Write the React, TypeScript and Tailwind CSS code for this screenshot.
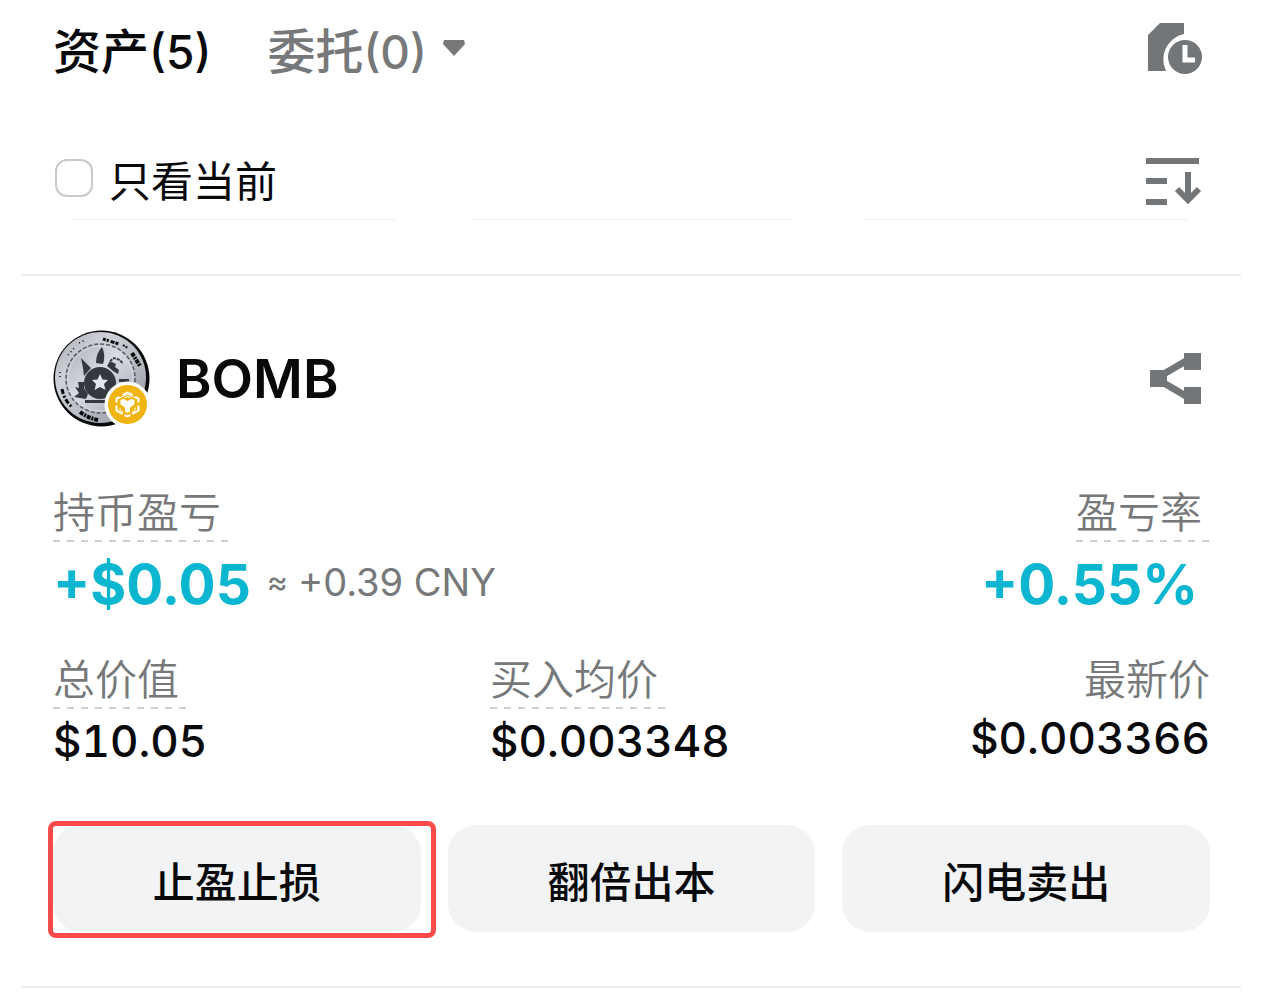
import React, { useState } from 'react'
import clsx from 'clsx'

const ACTIONS = ['止盈止损', '翻倍出本', '闪电卖出']

const HistoryIcon = () => (
    <svg width="56" height="52" viewBox="0 0 56 52" fill="#737678">
        <path d="M12 0H36V11A26 26 0 0 0 18 48H0V12Z" />
        <circle cx="37" cy="34" r="17" />
        <path d="M37 22V37H47" fill="none" stroke="#fff" strokeWidth="5" />
    </svg>
)

const SortIcon = () => (
    <svg width="56" height="48" viewBox="0 0 56 48" fill="none" stroke="#737678">
        <path d="M0 3H53M0 23H21M0 44H21" strokeWidth="6" />
        <path d="M42 14V42M31 31L42 42L53 31" strokeWidth="6" />
    </svg>
)

const ShareIcon = () => (
    <svg width="52" height="52" viewBox="0 0 52 52" fill="#737678">
        <path d="M0 17H17V34H0ZM34 0H51V17H34ZM34 34H51V51H34Z" />
        <path d="M12 22L36 8M12 29L36 43" fill="none" stroke="#737678" strokeWidth="7" />
    </svg>
)

const CoinLogo = () => (
    <svg width="97" height="97" viewBox="0 0 97 97" role="img" aria-label="BOMB">
        <defs>
            <linearGradient id="coin" x1="0" y1="0" x2="1" y2="1">
                <stop offset="0" stopColor="#a7a9af" />
                <stop offset="0.3" stopColor="#cfd1d8" />
                <stop offset="0.6" stopColor="#b9bcc4" />
                <stop offset="1" stopColor="#8f9299" />
            </linearGradient>
            <linearGradient id="face" x1="0" y1="0" x2="1" y2="1">
                <stop offset="0" stopColor="#a9acb4" />
                <stop offset="0.45" stopColor="#d9dce4" />
                <stop offset="1" stopColor="#a3a6af" />
            </linearGradient>
        </defs>
        <circle cx="48.5" cy="48.5" r="48" fill="#08090b" />
        <circle cx="47.5" cy="47.5" r="45.5" fill="url(#coin)" />
        <circle cx="47.5" cy="48.5" r="34.5" fill="url(#face)" stroke="#555960" strokeWidth="1.5" strokeDasharray="4 2" />
        <circle cx="47.5" cy="48.5" r="32.5" fill="none" stroke="#d8dae0" />
        <g fill="none" stroke="#08090b" strokeWidth="3">
            <path d="M50 9L66 14" strokeDasharray="3 1 2 2 4 1" />
            <path d="M70 15L75 18" strokeDasharray="2 1" strokeWidth="2" />
            <path d="M79 23L87 36" strokeDasharray="4 1 2 1" strokeWidth="4" />
            <path d="M9 59Q11 70 19 77" strokeDasharray="5 2 2 2" />
            <path d="M27 82Q35 88 45 90" strokeDasharray="4 1 2 1" strokeWidth="4" />
            <path d="M15 25L22 17M7 47V40M26 13L32 10" strokeDasharray="1 3" strokeWidth="1.5" />
        </g>
        <g fill="#343941">
            <path d="M49 17Q43 23 43 33L50 34Q53 25 49 17Z" />
            <path d="M28 28L38 38L31 46L30 38Z" />
            <path d="M25 52H31V58L35 64L33 69L21 67L26 63L22 57L26 58Z" />
            <path d="M54 36L57 31L63 34L62 37L66 40L65 44L60 41Z" />
            <circle cx="47" cy="53" r="16" />
            <path d="M66 49H76V52H66ZM32 70H54V73H32Z" />
        </g>
        <path d="M57 31L61 28L67 30L70 34" fill="none" stroke="#343941" strokeWidth="2" strokeDasharray="3 1" />
        <path d="M47 44L49.500 49.500L55 50L51 54L52.500 60L47 57L41.500 60L43 54L39 50L44.500 49.500Z" fill="#e3e5ea" />
        <circle cx="74.500" cy="74.500" r="23" fill="#fff" />
        <circle cx="74.500" cy="74.500" r="19.500" fill="#efb40f" />
        <g transform="translate(74.5 74.5)" fill="none" stroke="#fff" strokeWidth="2">
            <path d="M-5 -9.500L0 -12L5 -9.500M8 -7.500L11 -6V-2M11 1V6L5 9.500M3 10.500L0 12L-3 10.500M-5 9.500L-11 6V1M-11 -2V-6L-8 -7.500" />
            <path d="M-10 -6L-6 -7.500L0 -10M10 -6L6 -7.500L0 -10M-3 -6.500L0 -8L3 -6.500" strokeWidth="1" />
            <path d="M-7 -4.500L-4 -5.500L0 -3.500L4 -5.500L7 -4.500V0L2.500 3V7L0 8.500L-2.500 7V3L-7 0Z" fill="#fff" stroke="none" />
            <path d="M-7.500 3V6L-4 8M7.500 3V6L4 8" strokeWidth="1" />
        </g>
    </svg>
)

type LabelProps = { children: React.ReactNode; dashed?: boolean }

const Label = ({ children, dashed = true }: LabelProps) => (
    <div
        className={clsx(
            'text-[42px] leading-[56px] font-[350] text-[#76787a]',
            dashed &&
                'bg-[repeating-linear-gradient(90deg,#cfcfcf_0_7px,transparent_7px_14px)] bg-size-[100%_2px] bg-bottom bg-no-repeat pr-2 pb-px'
        )}
    >
        {children}
    </div>
)

export default function App() {
    const [onlyCurrent, setOnlyCurrent] = useState(false)

    return (
        <main className="bg-white px-[22px] font-['Inter','Noto_Sans_CJK_SC',sans-serif] text-[#08090a]">
            <header className="flex h-[84px] items-start justify-between px-[31px] pt-5">
                <nav className="flex items-center gap-14 leading-[64px] font-medium">
                    <button className="flex items-center">
                        <span className="text-[48px]">资产</span>
                        <span className="text-[46px]">(5)</span>
                    </button>
                    <button className="flex items-center text-[#76787a]">
                        <span className="text-[48px]">委托</span>
                        <span className="text-[46px]">(0)</span>
                        <svg className="mb-2 ml-4" width="22" height="16" viewBox="0 0 22 16" fill="#76787a">
                            <path d="M1 0H21L22 4L11 16L0 4Z" />
                        </svg>
                    </button>
                </nav>
                <button aria-label="历史" className="mr-1.5 pt-[3px]">
                    <HistoryIcon />
                </button>
            </header>

            <div className="flex h-[135px] items-center justify-between px-[31px] pt-[60px]">
                <label className="flex items-center gap-4 text-[42px] leading-[60px]">
                    <input
                        type="checkbox"
                        checked={onlyCurrent}
                        onChange={(e) => setOnlyCurrent(e.target.checked)}
                        className="mb-2 ml-0.5 size-[38px] appearance-none rounded-xl border-2 border-[#cacaca] checked:bg-[#08090a]"
                    />
                    只看当前
                </label>
                <button aria-label="排序" className="mr-2">
                    <SortIcon />
                </button>
            </div>

            <div className="flex justify-between px-[52px]">
                <hr className="w-[29%] border-[#f0f0f0]" />
                <hr className="w-[29%] border-[#f0f0f0]" />
                <hr className="w-[29%] border-[#f0f0f0]" />
            </div>

            <section className="mt-[54px] border-y-2 border-[#ececec] px-[31px] py-[54px]">
                <div className="flex items-center justify-between">
                    <div className="flex items-center gap-[26px]">
                        <CoinLogo />
                        <h2 className="text-[54px] leading-[64px] font-semibold">BOMB</h2>
                    </div>
                    <button aria-label="分享" className="mr-2">
                        <ShareIcon />
                    </button>
                </div>

                <div className="mt-[58px] flex justify-between">
                    <div className="flex flex-col items-start gap-2.5">
                        <Label>持币盈亏</Label>
                        <p className="flex items-center gap-4 leading-[64px]">
                            <span className="text-[55px] font-bold text-[#0cb6d0]">+$0.05</span>
                            <span className="flex items-center gap-2.5 pb-1 text-[38px] leading-[60px] text-[#76787a]">
                                <span className="text-[32px]">≈</span>
                                +0.39 CNY
                            </span>
                        </p>
                    </div>
                    <div className="flex flex-col items-end gap-2.5">
                        <Label>盈亏率</Label>
                        <p className="mr-3 text-[55px] leading-[64px] font-bold text-[#0cb6d0]">+0.55%</p>
                    </div>
                </div>

                <div className="mt-9 grid grid-cols-[437px_1fr_auto] text-[44px] leading-[48px] font-medium tabular-nums">
                    <div className="flex flex-col items-start gap-2">
                        <Label>总价值</Label>
                        <p>$10.05</p>
                    </div>
                    <div className="flex flex-col items-start gap-2">
                        <Label>买入均价</Label>
                        <p>$0.003348</p>
                    </div>
                    <div className="flex flex-col items-end gap-1.5">
                        <Label dashed={false}>最新价</Label>
                        <p>$0.003366</p>
                    </div>
                </div>

                <div className="mt-[60px] grid grid-cols-3 gap-[27px]">
                    {ACTIONS.map((action, i) => (
                        <div key={action} className="relative">
                            <button className="h-[107px] w-full rounded-[28px] bg-[#f2f3f5] pt-2 text-[42px] font-medium">
                                {action}
                            </button>
                            {i === 0 && (
                                <span className="pointer-events-none absolute -top-1 -right-[15px] -bottom-1.5 -left-[5px] rounded-lg border-5 border-[#f94b4a]" />
                            )}
                        </div>
                    ))}
                </div>
            </section>
        </main>
    )
}
